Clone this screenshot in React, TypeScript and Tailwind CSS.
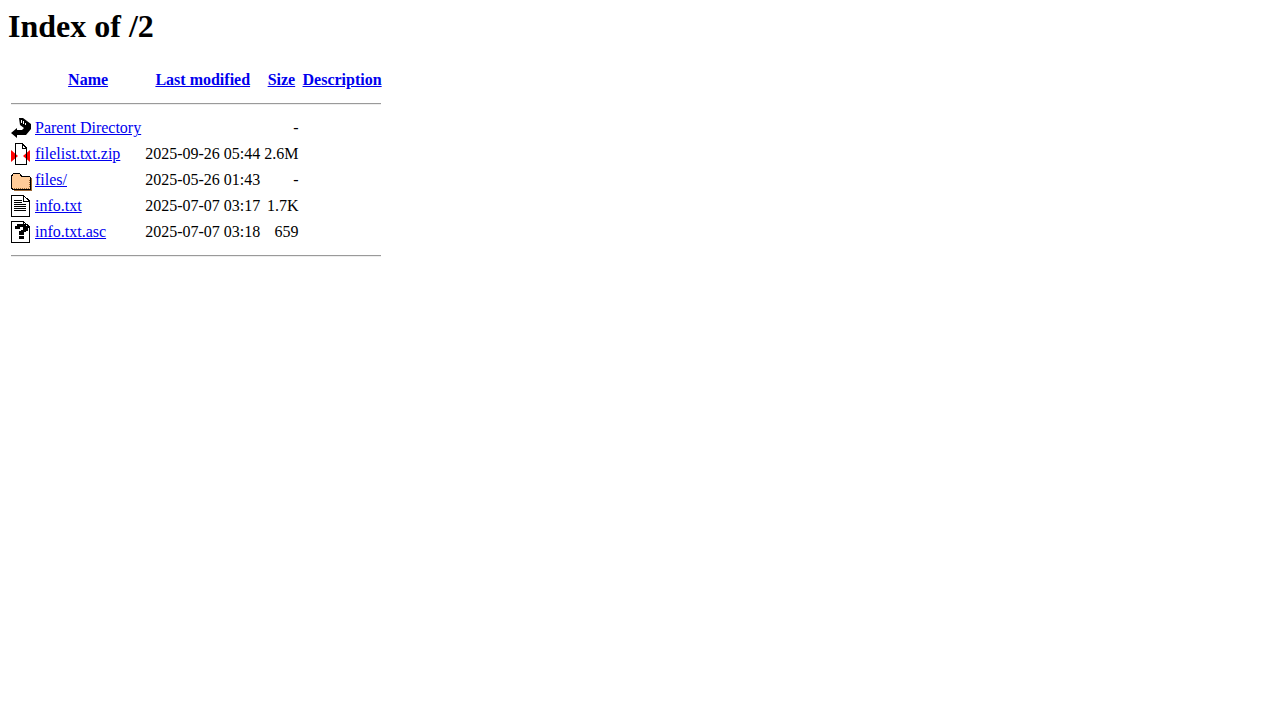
const rows = [
  { icon: "back", name: "Parent Directory", date: "", size: "-" },
  { icon: "zip", name: "filelist.txt.zip", date: "2025-09-26 05:44", size: "2.6M" },
  { icon: "folder", name: "files/", date: "2025-05-26 01:43", size: "-" },
  { icon: "text", name: "info.txt", date: "2025-07-07 03:17", size: "1.7K" },
  { icon: "unknown", name: "info.txt.asc", date: "2025-07-07 03:18", size: "659" },
];

function Icon({ type }: { type: string }) {
  return (
    <svg width="20" height="22" viewBox="0 0 20 22" className="block overflow-visible" shapeRendering="crispEdges">
      {type === "back" && (
        <>
          <path d="M0 16L6 11V13H11L13 11L9 8L8 1H12L20 7V12L15 18H6V21Z" fill="#000" shapeRendering="auto" />
          <path d="M10 3H11V6H10ZM12 4H13V7H12ZM14 6H15V8H14Z" fill="#fff" />
        </>
      )}
      {type === "zip" && (
        <>
          <path d="M4.5 0.5H11L15.5 5V21.5H4.5Z" fill="#fff" />
          <path d="M0 7L7 13L0 19Z" fill="#f00" shapeRendering="auto" />
          <path d="M19 7L12 13L19 19Z" fill="#f00" shapeRendering="auto" />
          <path d="M4.5 0.5H11L15.5 5V21.5H4.5Z" fill="none" stroke="#000" />
          <path d="M11 1V5H15" fill="none" stroke="#000" />
        </>
      )}
      {type === "folder" && (
        <>
          <path d="M0.5 7L2.5 4.5H8.5L10.5 7H18L19 8V20H1.5L0.5 19Z" fill="#ffcc99" stroke="#000" />
          <path d="M3 19H18V10" fill="none" stroke="#996633" strokeDasharray="1 1" />
          <path d="M20 9V21H3" fill="none" stroke="#996633" />
        </>
      )}
      {type === "text" && (
        <>
          <path d="M0.5 0.5H12.5L18.5 6V21.5H0.5Z" fill="#fff" stroke="#000" />
          <path d="M12.5 1V6.5H18" fill="none" stroke="#000" />
          <path d="M3 5H11V6H3ZM3 7H11V8H3ZM3 9H15V10H3ZM3 11H15V12H3ZM3 13H15V14H3ZM3 15H15V16H3Z" fill="#000" />
        </>
      )}
      {type === "unknown" && (
        <>
          <path d="M0.5 0.5H12.5L18.5 6V21.5H0.5Z" fill="#fff" stroke="#000" />
          <path d="M12.5 1V6.5H18" fill="none" stroke="#000" />
          <path d="M4 8V5H6V3H15V5H17V10H15V11H13V14H8V10H10V9H12V6H9V8ZM8 15H13V18H8Z" fill="#000" />
        </>
      )}
    </svg>
  );
}

export default function App() {
  return (
    <div className="min-h-screen bg-white p-2 font-['Liberation_Serif',serif] text-base leading-[18px] text-black">
      <h1 className="mb-[21.44px] text-[32px] font-bold leading-[37px]">Index of /2</h1>
      <table className="border-separate border-spacing-[2px]">
        <tbody>
          <tr>
            <th className="p-px">
              <div className="h-[22px] w-5" />
            </th>
            <th className="p-px"><a href="#" className="text-[#0000ee] underline">Name</a></th>
            <th className="p-px"><a href="#" className="text-[#0000ee] underline">Last modified</a></th>
            <th className="p-px"><a href="#" className="text-[#0000ee] underline">Size</a></th>
            <th className="p-px"><a href="#" className="text-[#0000ee] underline">Description</a></th>
          </tr>
          <tr>
            <th colSpan={5} className="p-px">
              <hr className="my-2 mr-px h-[2px] border-y border-t-[#9a9a9a] border-b-[#eeeeee]" />
            </th>
          </tr>
          {rows.map((row) => (
            <tr key={row.name}>
              <td className="p-px align-top"><Icon type={row.icon} /></td>
              <td className="p-px"><a href="#" className="text-[#0000ee] underline">{row.name}</a></td>
              <td className="p-px text-right">{row.date}</td>
              <td className="p-px text-right">{row.size}</td>
              <td className="p-px">&nbsp;</td>
            </tr>
          ))}
          <tr>
            <th colSpan={5} className="p-px">
              <hr className="my-2 mr-px h-[2px] border-y border-t-[#9a9a9a] border-b-[#eeeeee]" />
            </th>
          </tr>
        </tbody>
      </table>
    </div>
  );
}
